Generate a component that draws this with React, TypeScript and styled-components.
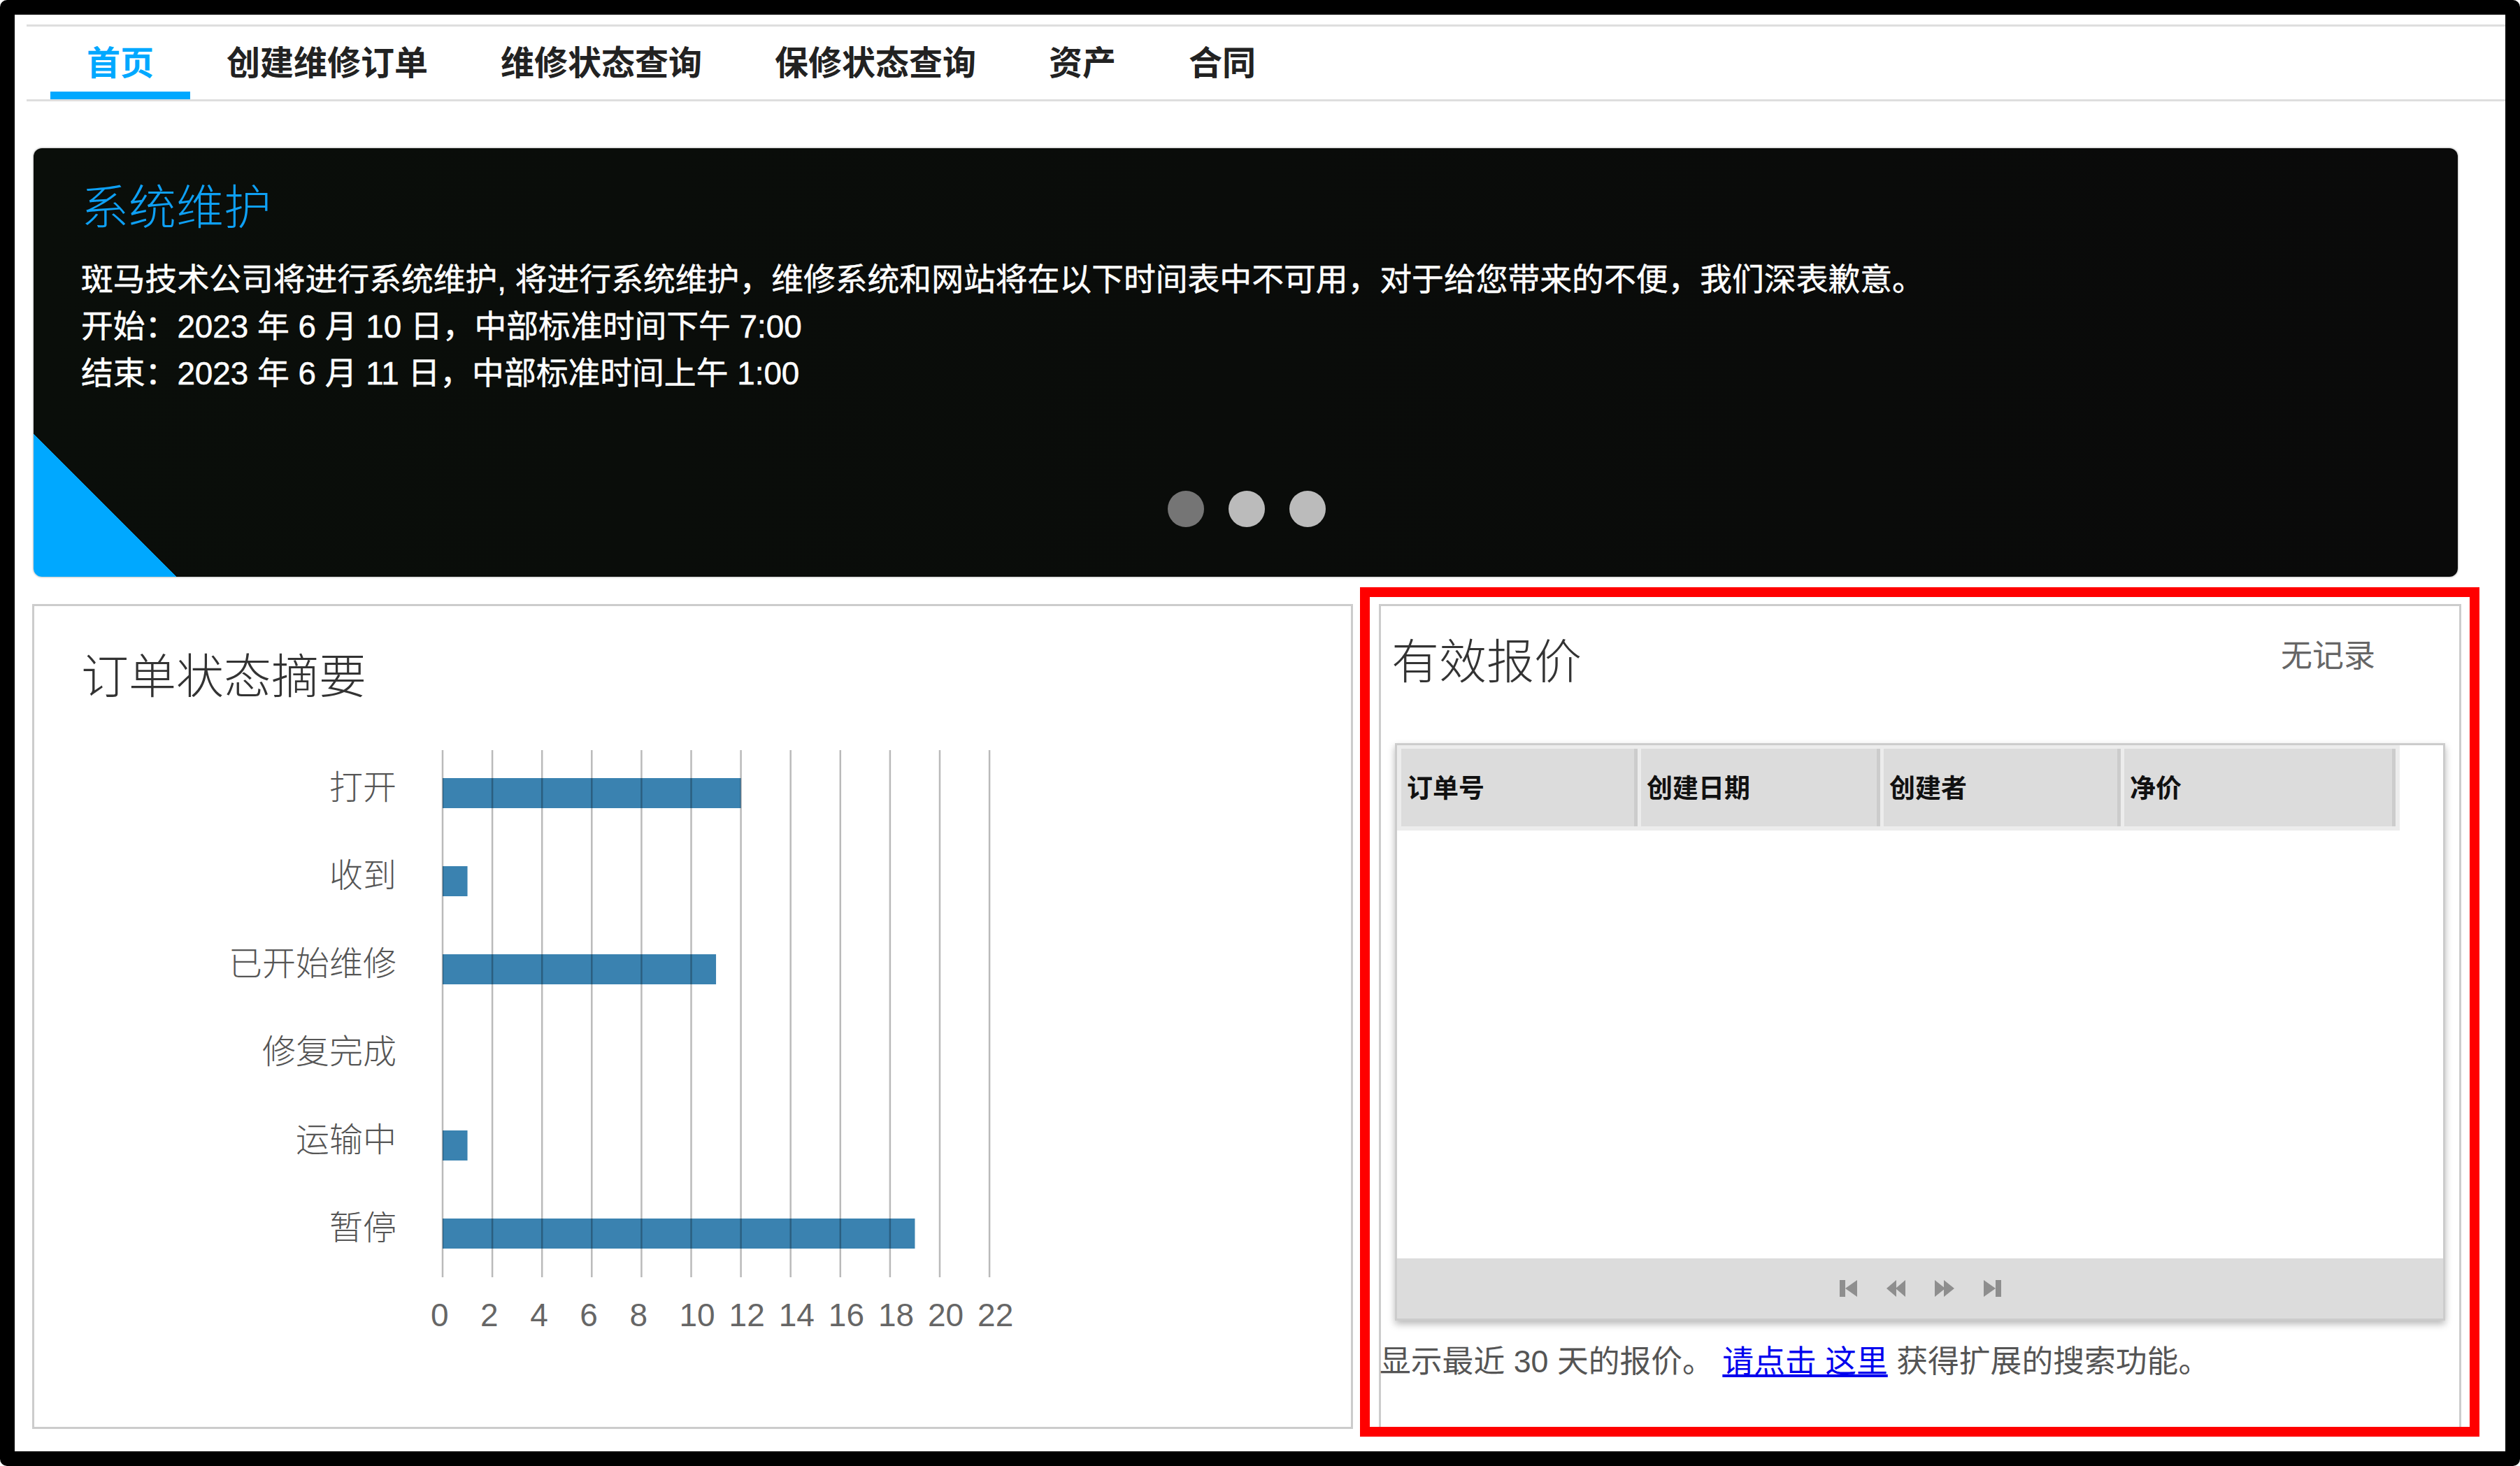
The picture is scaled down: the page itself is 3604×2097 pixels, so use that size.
import React from "react";
import styled, { createGlobalStyle } from "styled-components";

const FONT = `"Liberation Sans", "Noto Sans CJK SC", sans-serif`;

const Global = createGlobalStyle`
  html, body { margin: 0; padding: 0; background: #fff; }
  body { font-family: ${FONT}; }
`;

const Frame = styled.div`
  box-sizing: border-box;
  width: 3604px;
  height: 2097px;
  border: 21px solid #000;
  border-radius: 10px;
  background: #fff;
  overflow: hidden;
`;

const Nav = styled.nav`
  box-sizing: border-box;
  height: 110px;
  margin: 14px 0 0 17px;
  padding-left: 34px;
  display: flex;
  border-top: 3px solid #dedede;
  border-bottom: 3px solid #dedede;
`;

const Tab = styled.div<{ $active?: boolean }>`
  box-sizing: border-box;
  height: 104px;
  padding: 11px 52px 0;
  font-size: 48px;
  line-height: 84px;
  font-weight: 700;
  color: ${(p) => (p.$active ? "#00a8ff" : "#222")};
  border-bottom: 11px solid ${(p) => (p.$active ? "#00a8ff" : "transparent")};
`;

const Banner = styled.section`
  box-sizing: border-box;
  height: 613px;
  margin: 67px 68px 0 27px;
  padding: 45px 66px 71px 68px;
  display: flex;
  flex-direction: column;
  border-radius: 12px;
  box-shadow: 0 0 3px #888;
  background:
    linear-gradient(45deg, #00a8ff 50%, transparent 50.2%) left bottom / 204px 204px no-repeat,
    linear-gradient(90deg, #0a0e0a, #0a0a0a);
`;

const BannerTitle = styled.h2`
  margin: 0 0 30px;
  font-size: 68px;
  line-height: 80px;
  font-weight: 300;
  color: #0ea0f5;
`;

const BannerLine = styled.div`
  font-size: 45.8px;
  line-height: 67px;
  color: #fff;
  white-space: nowrap;
  -webkit-text-stroke: 0.5px #fff;
`;

const Dots = styled.div`
  margin-top: auto;
  display: flex;
  justify-content: center;
  gap: 35px;
`;

const Dot = styled.span<{ $on?: boolean }>`
  width: 52px;
  height: 52px;
  border-radius: 50%;
  background: ${(p) => (p.$on ? "#757575" : "#bbb")};
`;

const Row = styled.div`
  display: flex;
  gap: 37px;
  margin: 39px 63px 0 25px;
`;

const Card = styled.section`
  box-sizing: border-box;
  position: relative;
  height: 1180px;
  border: 3px solid #ccc;
`;

const LeftCard = styled(Card)`
  width: 1889px;
  padding: 61px 0 0 67px;
`;

const RightCard = styled(Card)`
  width: 1548px;
`;

const Highlight = styled.div`
  position: absolute;
  left: -30px;
  right: -29px;
  top: -27px;
  bottom: -14px;
  border: 14px solid #f00;
  pointer-events: none;
`;

const CardTitle = styled.h3`
  margin: 0;
  font-size: 68px;
  line-height: 80px;
  font-weight: 300;
  color: #333;
`;

const ChartSvg = styled.svg`
  display: block;
  width: 1300px;
  height: 860px;
  margin: 51px 0 0 85px;
  font-family: ${FONT};
`;

const TitleRow = styled.div`
  display: flex;
  justify-content: space-between;
  padding: 40px 120px 0 15px;
`;

const NoRecords = styled.div`
  margin-top: 2px;
  font-size: 45px;
  line-height: 60px;
  color: #666;
`;

const Panel = styled.div`
  box-sizing: border-box;
  width: 1502px;
  height: 826px;
  margin: 76px 0 0 20px;
  display: flex;
  flex-direction: column;
  border: 3px solid #ccc;
  box-shadow: 0 5px 10px rgba(0, 0, 0, 0.28);
  background: #fff;
`;

const HeaderStrip = styled.div`
  align-self: flex-start;
  display: flex;
  gap: 5px;
  padding: 5px 6px 6px 6px;
  background: #ececec;
`;

const HeaderCell = styled.div<{ $w: number }>`
  box-sizing: border-box;
  width: ${(p) => p.$w}px;
  height: 111px;
  padding-left: 8px;
  border-right: 5px solid #ccc;
  background: #dcdcdc;
  font-size: 37px;
  line-height: 115px;
  font-weight: 700;
  color: #111;
`;

const PanelBody = styled.div`
  flex: 1;
`;

const Pager = styled.div`
  height: 86px;
  display: flex;
  align-items: center;
  justify-content: center;
  gap: 42px;
  background: #dcdcdc;
`;

const PagerIcon = styled.svg`
  display: block;
  height: 24px;
  fill: #8e8e8e;
`;

const Note = styled.p`
  margin: 28px 0 0 -2px;
  font-size: 44.8px;
  line-height: 60px;
  color: #555;
  white-space: nowrap;
`;

const NoteLink = styled.a`
  color: #0000ee;
  text-decoration: underline;
`;

const TABS = ["首页", "创建维修订单", "维修状态查询", "保修状态查询", "资产", "合同"];

const ROWS: [string, number][] = [
  ["打开", 12],
  ["收到", 1],
  ["已开始维修", 11],
  ["修复完成", 0],
  ["运输中", 1],
  ["暂停", 19],
];

const COLUMNS: [string, number][] = [
  ["订单号", 338],
  ["创建日期", 342],
  ["创建者", 339],
  ["净价", 388],
];

const PAGER: [number, string][] = [
  [25, "M0 0h8v24H0zM25 0v24L8 12z"],
  [27, "M14 0v24L0 12zM27 0v24L13 12z"],
  [28, "M0 0v24l15-12zM13 0v24l15-12z"],
  [25, "M25 0h-8v24h8zM0 0v24l17-12z"],
];

const ORIGIN = 432;
const UNIT = 35.55;

function StatusChart() {
  const ticks = Array.from({ length: 12 }, (_, i) => i * 2);
  return (
    <ChartSvg viewBox="0 0 1300 860">
      {ROWS.map(([name, value], i) => (
        <g key={name}>
          <text x={366} y={84 + i * 126} textAnchor="end" fontSize={48} fontWeight={300} fill="#555">
            {name}
          </text>
          <rect x={ORIGIN} y={54 + i * 126} width={value * UNIT} height={43} fill="#3a82b0" />
        </g>
      ))}
      {ticks.map((t) => (
        <g key={t}>
          <line
            x1={ORIGIN + t * UNIT}
            x2={ORIGIN + t * UNIT}
            y1={14}
            y2={768}
            stroke="rgba(0,0,0,0.27)"
            strokeWidth={2.5}
          />
          <text x={ORIGIN + t * UNIT - 17} y={838} fontSize={46} fill="#666">
            {t}
          </text>
        </g>
      ))}
    </ChartSvg>
  );
}

export default function App() {
  return (
    <Frame>
      <Global />
      <Nav>
        {TABS.map((t, i) => (
          <Tab key={t} $active={i === 0}>
            {t}
          </Tab>
        ))}
      </Nav>
      <Banner>
        <BannerTitle>系统维护</BannerTitle>
        <BannerLine>斑马技术公司将进行系统维护, 将进行系统维护，维修系统和网站将在以下时间表中不可用，对于给您带来的不便，我们深表歉意。</BannerLine>
        <BannerLine>开始：2023 年 6 月 10 日，中部标准时间下午 7:00</BannerLine>
        <BannerLine>结束：2023 年 6 月 11 日，中部标准时间上午 1:00</BannerLine>
        <Dots>
          <Dot $on />
          <Dot />
          <Dot />
        </Dots>
      </Banner>
      <Row>
        <LeftCard>
          <CardTitle>订单状态摘要</CardTitle>
          <StatusChart />
        </LeftCard>
        <RightCard>
          <TitleRow>
            <CardTitle>有效报价</CardTitle>
            <NoRecords>无记录</NoRecords>
          </TitleRow>
          <Panel>
            <HeaderStrip>
              {COLUMNS.map(([name, w]) => (
                <HeaderCell key={name} $w={w}>
                  {name}
                </HeaderCell>
              ))}
            </HeaderStrip>
            <PanelBody />
            <Pager>
              {PAGER.map(([w, d]) => (
                <PagerIcon key={d} width={w} viewBox={`0 0 ${w} 24`}>
                  <path d={d} />
                </PagerIcon>
              ))}
            </Pager>
          </Panel>
          <Note>
            显示最近 30 天的报价。 <NoteLink href="#">请点击 这里</NoteLink> 获得扩展的搜索功能。
          </Note>
          <Highlight />
        </RightCard>
      </Row>
    </Frame>
  );
}
